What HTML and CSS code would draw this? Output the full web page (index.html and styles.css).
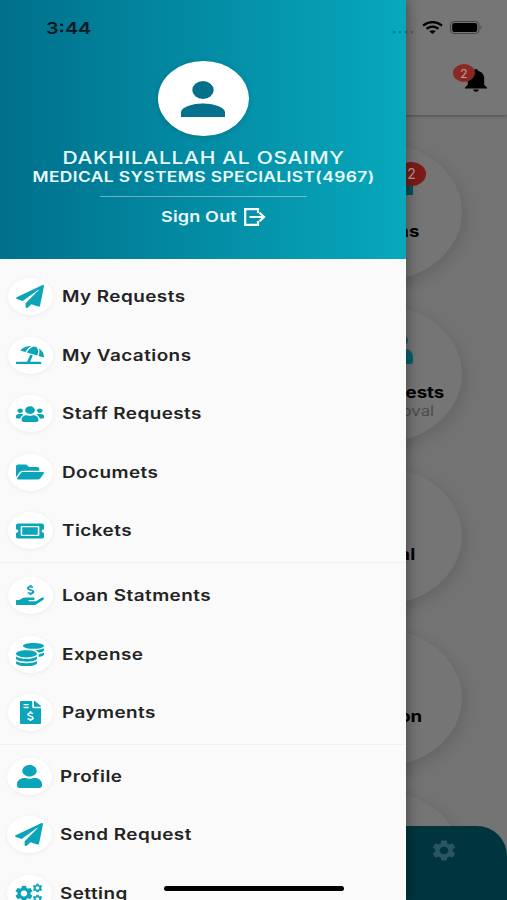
FILE: index.html
```html
<!DOCTYPE html>
<html lang="en">
<head>
<meta charset="utf-8">
<title>Employee menu</title>
<link rel="stylesheet" href="styles.css">
</head>
<body>
<svg class="defs" aria-hidden="true">
  <symbol id="plane" viewBox="0 0 512 512" preserveAspectRatio="none"><path d="M476 3.2L12.5 270.6c-18.1 10.4-15.8 35.6 2.2 43.2L121 358.4l287.3-253.2c5.5-4.9 13.3 2.6 8.6 8.3L176 407v80.5c0 23.6 28.5 32.9 42.5 15.8L282 426l124.6 52.2c14.2 6 30.4-2.9 33-18.2l72-432C515 7.8 493.3-6.8 476 3.2z"/></symbol>
  <symbol id="beach" viewBox="0 0 640 512" preserveAspectRatio="none"><path d="M115.38 136.9l102.11 37.18c35.19-81.54 86.21-144.29 139-173.7-95.88-4.89-188.78 36.96-248.53 111.8-6.69 8.4-2.66 21.05 7.42 24.72zm132.25 48.16l238.48 86.83c35.76-121.38 18.7-231.66-42.63-253.98-7.4-2.7-15.13-4-23.09-4-58.02.01-128.27 69.17-172.76 171.15zM521.48 60.5c6.22 16.3 10.83 34.6 13.2 55.19 5.74 49.89-1.42 108.23-18.95 166.98l102.62 37.36c10.09 3.67 21.31-3.43 21.57-14.17 2.32-95.69-41.91-187.44-118.44-245.36zM560 447.98H321.06L386 269.5l-60.14-21.9-72.9 200.37H16c-8.84 0-16 7.16-16 16.01v32.01C0 504.83 7.16 512 16 512h544c8.84 0 16-7.17 16-16.01v-32.01c0-8.84-7.16-16-16-16z"/></symbol>
  <symbol id="users" viewBox="0 0 640 512" preserveAspectRatio="none"><path d="M96 224c35.3 0 64-28.7 64-64s-28.7-64-64-64-64 28.7-64 64 28.7 64 64 64zm448 0c35.3 0 64-28.7 64-64s-28.7-64-64-64-64 28.7-64 64 28.7 64 64 64zm32 32h-64c-17.6 0-33.5 7.1-45.1 18.6 40.3 22.1 68.9 62 75.1 109.4h66c17.7 0 32-14.3 32-32v-32c0-35.3-28.7-64-64-64zm-256 0c61.9 0 112-50.1 112-112S381.9 32 320 32 208 82.1 208 144s50.1 112 112 112zm76.8 32h-8.3c-20.8 10-43.9 16-68.5 16s-47.6-6-68.5-16h-8.3C179.6 288 128 339.6 128 403.2V432c0 26.5 21.5 48 48 48h288c26.5 0 48-21.5 48-48v-28.8c0-63.6-51.6-115.2-115.2-115.2zm-223.7-13.4C161.5 263.1 145.6 256 128 256H64c-35.3 0-64 28.7-64 64v32c0 17.7 14.3 32 32 32h65.9c6.3-47.4 34.9-87.3 75.2-109.4z"/></symbol>
  <symbol id="folder" viewBox="0 0 576 512" preserveAspectRatio="none"><path d="M572.694 292.093L500.27 416.248A63.997 63.997 0 0 1 444.989 448H45.025c-18.523 0-30.064-20.093-20.731-36.093l72.424-124.155A64 64 0 0 1 152 256h399.964c18.523 0 30.064 20.093 20.73 36.093zM152 224h328v-48c0-26.51-21.49-48-48-48H272l-64-64H48C21.49 64 0 85.49 0 112v278.046l69.077-118.418C86.214 242.25 117.989 224 152 224z"/></symbol>
  <symbol id="ticket" viewBox="0 0 576 512" preserveAspectRatio="none"><path d="M128 160h320v192H128V160zm400 96c0 26.51 21.49 48 48 48v96c0 26.51-21.49 48-48 48H48c-26.51 0-48-21.49-48-48v-96c26.51 0 48-21.49 48-48s-21.49-48-48-48v-96c0-26.51 21.49-48 48-48h480c26.51 0 48 21.49 48 48v96c-26.51 0-48 21.49-48 48zm-48-104c0-13.255-10.745-24-24-24H120c-13.255 0-24 10.745-24 24v208c0 13.255 10.745 24 24 24h336c13.255 0 24-10.745 24-24V152z"/></symbol>
  <symbol id="loan" viewBox="0 0 576 512" preserveAspectRatio="none"><path d="M565.3 328.1c-11.8-10.7-30.2-10-42.6 0L430.3 402c-11.3 9.1-25.4 14-40 14H272c-8.8 0-16-7.2-16-16s7.2-16 16-16h78.3c15.9 0 30.7-10.9 33.3-26.6 3.3-20-12.1-37.4-31.6-37.4H192c-27 0-53.1 9.3-74.1 26.3L71.4 384H16c-8.8 0-16 7.2-16 16v96c0 8.8 7.2 16 16 16h356.8c14.5 0 28.6-4.9 40-14L564 377c15.2-12.1 16.4-35.3 1.3-48.9z"/><path d="M350 62C328 38 246 32 246 82c0 55 110 35 110 92 0 52-86 48-112 18M300 0v42M300 214v42" fill="none" stroke="currentColor" stroke-width="42"/></symbol>
  <symbol id="coins" viewBox="0 0 512 512" preserveAspectRatio="none"><path d="M0 405.3V448c0 35.3 86 64 192 64s192-28.7 192-64v-42.7C342.7 434.4 267.2 448 192 448S41.3 434.4 0 405.3zM320 128c106 0 192-28.7 192-64S426 0 320 0 128 28.7 128 64s86 64 192 64zM0 300.4V352c0 35.3 86 64 192 64s192-28.7 192-64v-51.6c-41.3 34-116.9 51.6-192 51.6S41.3 334.4 0 300.4zm416 11c57.3-11.1 96-31.7 96-55.4v-42.7c-23.2 16.4-57.3 27.6-96 34.5v63.6zM192 160C86 160 0 195.8 0 240s86 80 192 80 192-35.8 192-80-86-80-192-80zm219.3 56.3c60-10.8 100.7-32 100.7-56.3v-42.7c-35.5 25.1-96.5 38.6-160.7 41.8 29.5 14.3 51.2 33.5 60 57.2z"/></symbol>
  <symbol id="invoice" viewBox="0 0 384 512" preserveAspectRatio="none"><path d="M377 105L279.1 7c-4.5-4.5-10.6-7-17-7H256v128h128v-6.1c0-6.3-2.5-12.4-7-16.9zm-153 31V0H24C10.7 0 0 10.7 0 24v464c0 13.3 10.7 24 24 24h336c13.3 0 24-10.7 24-24V160H248c-13.2 0-24-10.8-24-24zM64 72c0-4.42 3.58-8 8-8h80c4.42 0 8 3.58 8 8v16c0 4.42-3.58 8-8 8H72c-4.42 0-8-3.58-8-8V72zm0 80v-16c0-4.42 3.58-8 8-8h80c4.42 0 8 3.58 8 8v16c0 4.42-3.58 8-8 8H72c-4.42 0-8-3.58-8-8z"/><path d="M234 282C214 258 146 256 146 298c0 46 92 30 92 78 0 44-74 40-96 14M192 228v34M192 410v36" fill="none" stroke="#fff" stroke-width="32"/></symbol>
  <symbol id="user" viewBox="0 0 448 512" preserveAspectRatio="none"><path d="M224 256c70.7 0 128-57.3 128-128S294.7 0 224 0 96 57.3 96 128s57.3 128 128 128zm89.6 32h-16.7c-22.2 10.2-46.9 16-72.9 16s-50.6-5.8-72.9-16h-16.7C60.2 288 0 348.2 0 422.4V464c0 26.5 21.5 48 48 48h352c26.5 0 48-21.5 48-48v-41.6c0-74.2-60.2-134.4-134.4-134.4z"/></symbol>
  <symbol id="gear" viewBox="2 2 20 20" preserveAspectRatio="none"><path d="M19.14 12.94c.04-.3.06-.61.06-.94 0-.32-.02-.64-.07-.94l2.03-1.58c.18-.14.23-.41.12-.61l-1.92-3.32c-.12-.22-.37-.29-.59-.22l-2.39.96c-.5-.38-1.03-.7-1.62-.94l-.36-2.54c-.04-.24-.24-.41-.48-.41h-3.84c-.24 0-.43.17-.47.41l-.36 2.54c-.59.24-1.13.57-1.62.94l-2.39-.96c-.22-.08-.47 0-.59.22L2.74 8.87c-.12.21-.08.47.12.61l2.03 1.58c-.05.3-.09.63-.09.94s.02.64.07.94l-2.03 1.58c-.18.14-.23.41-.12.61l1.92 3.32c.12.22.37.29.59.22l2.39-.96c.5.38 1.03.7 1.62.94l.36 2.54c.05.24.24.41.48.41h3.84c.24 0 .44-.17.47-.41l.36-2.54c.59-.24 1.13-.56 1.62-.94l2.39.96c.22.08.47 0 .59-.22l1.92-3.32c.12-.22.07-.47-.12-.61l-2.01-1.58zM12 15.6c-1.98 0-3.6-1.62-3.6-3.6s1.62-3.6 3.6-3.6 3.6 1.62 3.6 3.6-1.62 3.6-3.6 3.6z"/></symbol>
  <symbol id="cogs" viewBox="0 0 28 24" preserveAspectRatio="none"><use href="#gear" x="0" y="3.500" width="18" height="17"/><use href="#gear" x="17.500" y="1.500" width="10" height="9.500"/><use href="#gear" x="17.500" y="13" width="10" height="9.500"/></symbol>
</svg>

<div class="screen">
  <main class="home">
    <header class="topbar">
      <div class="bell">
        <svg viewBox="0 0 22 25" preserveAspectRatio="none"><path d="M11 0c1.3 0 2 .9 2 2.200 3.700.8 6.200 3.700 6.200 7.800v7L22 20v1.200H0V20l2.800-3V10c0-4.100 2.500-7 6.200-7.800C9 .9 9.700 0 11 0zM8.300 22.400h5.400c0 3.200-5.400 3.200-5.400 0z"/></svg>
        <span class="count">2</span>
      </div>
    </header>
    <section class="tiles">
      <div class="tile tile-a"><span class="count">2</span><i class="tile-mark"></i><b>ns</b></div>
      <div class="tile tile-b"><svg class="tile-user" viewBox="0 0 32 30"><ellipse cx="20" cy="6.500" rx="7" ry="5.500"/><path d="M4 30V23c0-5 5-8 10-8h10c5 0 8 4 8 8v5q0 2-2 2z"/></svg><b>ests</b><small>oval</small></div>
      <div class="tile tile-c"><b>al</b></div>
      <div class="tile tile-d"><b>on</b></div>
      <div class="tile"></div>
    </section>
    <nav class="tabs"><svg><use href="#gear"/></svg></nav>
  </main>

  <aside class="drawer">
    <header class="profile">
      <div class="avatar"><svg viewBox="0 0 16 16" preserveAspectRatio="none"><ellipse cx="8" cy="4" rx="3.900" ry="4"/><path d="M0 16v-2c0-2.700 5-4 8-4s8 1.300 8 4v2z"/></svg></div>
      <div class="name"><span>DAKHILALLAH AL OSAIMY</span></div>
      <div class="role"><span>MEDICAL SYSTEMS SPECIALIST(4967)</span></div>
      <hr>
      <div class="signout"><span>Sign Out</span><svg viewBox="0 0 22 18"><path d="M14 5V1.200H1.200v15.600H14V13M5.500 9H19M15.500 4.800L20 9l-4.500 4.200"/></svg></div>
    </header>
    <ul class="menu">
      <li><i class="disc"><svg class="w27"><use href="#plane"/></svg></i><span>My Requests</span></li>
      <li><i class="disc"><svg class="beach"><use href="#beach"/></svg></i><span>My Vacations</span></li>
      <li><i class="disc"><svg class="low"><use href="#users"/></svg></i><span>Staff Requests</span></li>
      <li><i class="disc"><svg class="w27 flat"><use href="#folder"/></svg></i><span>Documets</span></li>
      <li><i class="disc"><svg class="w27 flat"><use href="#ticket"/></svg></i><span>Tickets</span></li>
    </ul>
    <ul class="menu">
      <li><i class="disc"><svg class="w27 flat"><use href="#loan"/></svg></i><span>Loan Statments</span></li>
      <li><i class="disc"><svg class="w27"><use href="#coins"/></svg></i><span>Expense</span></li>
      <li><i class="disc"><svg class="narrow"><use href="#invoice"/></svg></i><span>Payments</span></li>
    </ul>
    <ul class="menu shifted">
      <li><i class="disc"><svg class="user"><use href="#user"/></svg></i><span>Profile</span></li>
      <li><i class="disc"><svg class="w27"><use href="#plane"/></svg></i><span>Send Request</span></li>
      <li><i class="disc"><svg class="cogs"><use href="#cogs"/></svg></i><span>Setting</span></li>
    </ul>
  </aside>

  <div class="status">
    <span class="clock">3:44</span>
    <svg class="dots" viewBox="0 0 22 4"><circle cx="2" cy="2" r="1.500"/><circle cx="8" cy="2" r="1.500"/><circle cx="14" cy="2" r="1.500"/><circle cx="20" cy="2" r="1.500"/></svg>
    <svg class="wifi" viewBox="0 0 21 13" preserveAspectRatio="none"><path d="M1 4.500Q10.500-2.300 20 4.500M4.500 7.800Q10.500 3.400 16.500 7.800" fill="none" stroke="#000" stroke-width="2.300"/><path d="M7.300 10.300Q10.500 8.200 13.700 10.300L10.500 13z"/></svg>
    <svg class="battery" viewBox="0 0 33 13"><rect x=".5" y=".5" width="28.500" height="12" rx="3.500" fill="none" stroke="#444"/><rect x="2.200" y="2.100" width="25" height="8.800" rx="2"/><path d="M30.500 4.500q2 2 0 4z" fill="#444"/></svg>
  </div>
  <div class="home-indicator"></div>
</div>
</body>
</html>
```

FILE: styles.css
```css
* { box-sizing: border-box; }
body { margin: 0; font-family: Inter, "Liberation Sans", sans-serif; }
.defs { position: absolute; width: 0; height: 0; }
svg { display: block; flex: none; }
.screen { position: relative; width: 507px; height: 900px; overflow: hidden; background: #737373; }

/* dimmed page behind the drawer */
.home { display: flex; flex-direction: column; height: 900px; }
.topbar { height: 115px; flex: none; display: flex; justify-content: flex-end; padding: 69px 20px 0 0; background: #767676; box-shadow: 0 1px 3px rgba(0,0,0,.3); }
.bell { position: relative; width: 22px; height: 25px; }
.bell svg { width: 22px; height: 23px; }
.count { position: absolute; display: flex; align-items: center; justify-content: center; border-radius: 50%; background: #8a2924; color: #b5a09f; }
.bell .count { left: -12px; top: -5px; width: 22px; height: 18px; font-size: 12px; }
.tiles { flex: 1; min-height: 0; display: flex; flex-direction: column; gap: 24px; padding: 27.500px 0 0 298px; }
.tile { position: relative; flex: none; width: 164px; height: 138px; border-radius: 50%; background: #757575; box-shadow: 3px 5px 14px rgba(0,0,0,.12); display: flex; flex-direction: column; align-items: flex-end; }
.tile b { font-size: 15.500px; line-height: 20px; font-weight: 700; transform: scaleX(1.2); transform-origin: right; }
.tile small { font-size: 14px; line-height: 18px; color: #4c4c4c; transform: scaleX(1.2); transform-origin: right; }
.tile .count { right: 36px; top: 19px; width: 30px; height: 24px; font-size: 14px; padding-left: 1px; background: #7d1b18; }
.tile-a { padding: 40px 43px 0 0; }
.tile-mark { width: 13px; height: 12px; margin: 0 6px 27px 0; background: #07525f; }
.tile-b { padding: 28px 18px 0 0; }
.tile-user { width: 32px; height: 30px; margin: 1px 31px 19px 0; fill: #06606b; }
.tile-b small { margin: -1px 10px 0 0; }
.tile-c { padding: 78px 47px 0 0; }
.tile-d { padding: 78px 40px 0 0; }
.tabs { position: relative; height: 74.500px; flex: none; background: #003540; border-radius: 0 30px 0 0; padding: 14px 0 0 432px; }
.tabs svg { width: 24px; height: 21px; fill: #2b5660; }

/* drawer */
.drawer { position: absolute; inset: 0 auto 0 0; width: 406px; overflow: hidden; background: #fafafa; box-shadow: 0 0 14px rgba(0,0,0,.45); }
.profile { height: 259px; display: flex; flex-direction: column; align-items: center; padding-top: 61px; background: linear-gradient(90deg, #00708c, #07a8bd); color: #e9fbfd; }
.avatar { width: 91px; height: 75px; border-radius: 50%; background: #fff; display: flex; align-items: center; justify-content: center; box-shadow: 0 1px 6px rgba(0,0,0,.15); }
.avatar svg { width: 44px; height: 36px; margin-top: 1px; fill: #04718c; }
.name, .role { white-space: nowrap; padding-left: 1.500px; }
.name { height: 20px; margin-top: 12px; font-size: 17.500px; line-height: 20px; font-weight: 500; letter-spacing: .56px; }
.role { height: 18px; font-size: 14.500px; line-height: 18px; font-weight: 600; letter-spacing: .32px; }
.name span, .role span { display: inline-block; transform: scaleX(1.2); }
.profile hr { width: 207px; height: 1px; margin: 10px 0 0; border: 0; background: rgba(255,255,255,.4); }
.signout { display: flex; align-items: center; width: 105px; height: 20px; margin: 9.500px 0 0 21px; font-size: 15px; font-weight: 600; letter-spacing: .15px; }
.signout span { flex: none; width: 83px; white-space: nowrap; transform: scaleX(1.2); transform-origin: left; }
.signout svg { width: 22px; height: 18px; fill: none; stroke: #fff; stroke-width: 2.200; }

.menu { list-style: none; margin: 0; padding: 0 0 0 7.500px; color: #232323; }
.menu:first-of-type { padding-top: 8.200px; }
.menu + .menu { margin-top: 2px; padding-top: 3px; border-top: 1px solid #f0f0f0; }
.menu li { display: flex; align-items: center; height: 58.600px; }
.menu span { margin-left: 9.500px; font-size: 15.500px; font-weight: 600; letter-spacing: .36px; white-space: nowrap; transform: scaleX(1.22); transform-origin: left; }
.disc { flex: none; display: flex; align-items: center; justify-content: center; width: 45px; height: 37px; border-radius: 50%; background: #fff; box-shadow: 0 1px 5px rgba(0,0,0,.06); color: #0aa5b9; fill: currentColor; }
.w27 { width: 28px; height: 23px; }
.flat { height: 20px; }
.low { width: 28px; height: 18px; }
.beach { width: 28px; height: 18px; }
.narrow { width: 21px; height: 23px; }
.user { width: 25px; height: 23px; }
.cogs { width: 28px; height: 23px; }
.menu.shifted { padding-left: 6.500px; padding-top: 2px; }
.shifted span { margin-left: 8px; }

/* system overlays */
.status { position: absolute; inset: 0 0 auto 0; height: 54px; display: flex; align-items: center; padding: 0 24px 0 46px; }
.clock { margin: 1px auto 0 0; font-size: 16.500px; font-weight: 600; color: #06191e; transform: scaleX(1.2); transform-origin: left; }
.dots { width: 22px; height: 4px; margin: 9px 8px 0 0; fill: rgba(0,0,0,.22); }
.wifi { width: 21px; height: 13px; margin-right: 7px; }
.battery { width: 33px; height: 13px; }
.home-indicator { position: absolute; left: 164px; top: 886px; width: 180px; height: 5px; border-radius: 3px; background: #000; }
```
